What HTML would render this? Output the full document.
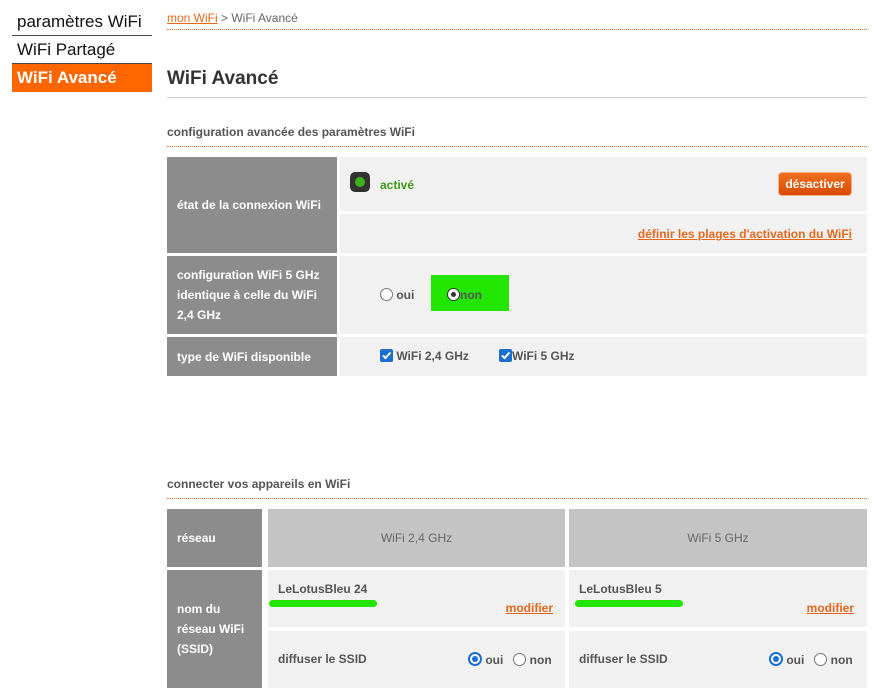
<!DOCTYPE html>
<html><head><meta charset="utf-8"><style>
*{margin:0;padding:0;box-sizing:border-box}
body{width:894px;height:688px;background:#fff;font-family:"Liberation Sans",Arial,sans-serif;position:relative;overflow:hidden;color:#555}
.a{position:absolute}
.dot{position:absolute;height:0;border-top:1px dotted #e07a30}
.lab{position:absolute;background:#8c8c8c;color:#fff;font-weight:bold;font-size:12px;line-height:20px;padding-left:10px;display:flex;align-items:center}
.cell{position:absolute;background:#f1f1f1}
.b{font-weight:bold;font-size:12px}
.lnk{color:#e8671c;text-decoration:underline;font-weight:bold;font-size:12px}
.rad{display:inline-block;width:13px;height:13px;border:1.5px solid #777;border-radius:50%;background:#fff;vertical-align:-2px}
.radb{display:inline-block;width:14px;height:14px;border:2px solid #1a6fd0;border-radius:50%;background:#fff;vertical-align:-2px;position:relative}
.radb:after{content:"";position:absolute;left:2px;top:2px;width:6px;height:6px;border-radius:50%;background:#1a6fd0}
.chk{display:inline-block;width:13px;height:13px;background:#1a6fd0;border-radius:2px;vertical-align:-2px;position:relative}
.chk svg{position:absolute;left:0;top:0}
</style></head><body>
<div class="a" style="left:17px;top:12px;font-size:17px;color:#111">paramètres WiFi</div>
<div class="a" style="left:12px;top:35px;width:140px;height:1px;background:#444"></div>
<div class="a" style="left:17px;top:40px;font-size:17px;color:#111">WiFi Partagé</div>
<div class="a" style="left:12px;top:63px;width:140px;height:1px;background:#444"></div>
<div class="a" style="left:12px;top:64px;width:140px;height:28px;background:#ff6600;color:#fff;font-weight:bold;font-size:17px;padding:4px 0 0 5px">WiFi Avancé</div>
<div class="a" style="left:167px;top:11px;font-size:12px;color:#666"><span style="color:#e8671c;text-decoration:underline">mon WiFi</span> &gt; WiFi Avancé</div>
<div class="dot" style="left:167px;top:29px;width:700px"></div>
<div class="a" style="left:167px;top:68px;font-size:19px;font-weight:bold;color:#333">WiFi Avancé</div>
<div class="a" style="left:167px;top:97px;width:700px;height:1px;background:#ccc"></div>
<div class="a b" style="left:167px;top:125px;color:#555">configuration avancée des paramètres WiFi</div>
<div class="dot" style="left:167px;top:146px;width:700px"></div>
<div class="lab" style="left:167px;top:157px;width:170px;height:96px">état de la connexion WiFi</div>
<div class="cell" style="left:340px;top:157px;width:527px;height:54px">
 <div class="a" style="left:10px;top:15px;width:20px;height:20px;background:#333;border-radius:5px"><div class="a" style="left:5px;top:5px;width:10px;height:10px;border-radius:50%;background:#3fb21a"></div></div>
 <div class="a b" style="left:40px;top:21px;color:#3d9a15">activé</div>
 <div class="a" style="left:438px;top:15px;width:74px;height:24px;background:linear-gradient(#f07020,#d94a00);border:1px solid #f5b080;border-radius:4px;color:#fff;font-weight:bold;font-size:12px;text-align:center;line-height:22px">désactiver</div>
</div>
<div class="cell" style="left:340px;top:214px;width:527px;height:39px">
 <div class="a lnk" style="right:15px;top:13px">définir les plages d'activation du WiFi</div>
</div>
<div class="lab" style="left:167px;top:256px;width:170px;height:78px">configuration WiFi 5 GHz<br>identique à celle du WiFi<br>2,4 GHz</div>
<div class="cell" style="left:340px;top:256px;width:527px;height:78px">
 <div class="a b" style="left:40px;top:32px"><span class="rad"></span> oui</div>
 <div class="a" style="left:91px;top:19px;width:78px;height:36px;background:#22e600"></div>
 <div class="a b" style="left:107px;top:32px"><span class="rad" style="border-color:#333;position:relative"><span class="a" style="left:2.5px;top:2.5px;width:5px;height:5px;border-radius:50%;background:#333"></span></span>non</div>
</div>
<div class="lab" style="left:167px;top:337px;width:170px;height:39px">type de WiFi disponible</div>
<div class="cell" style="left:340px;top:337px;width:527px;height:39px">
 <div class="a b" style="left:40px;top:12px"><span class="chk"><svg width="13" height="13"><path d="M3 6.5l2.5 2.5L10.5 3.5" stroke="#fff" stroke-width="2" fill="none"/></svg></span> WiFi 2,4 GHz</div>
 <div class="a b" style="left:159px;top:12px"><span class="chk"><svg width="13" height="13"><path d="M3 6.5l2.5 2.5L10.5 3.5" stroke="#fff" stroke-width="2" fill="none"/></svg></span>WiFi 5 GHz</div>
</div>
<div class="a b" style="left:167px;top:477px;color:#555">connecter vos appareils en WiFi</div>
<div class="dot" style="left:167px;top:498px;width:700px"></div>
<div class="lab" style="left:167px;top:509px;width:95px;height:58px">réseau</div>
<div class="a b" style="left:268px;top:509px;width:297px;height:58px;background:#c4c4c4;text-align:center;line-height:58px;color:#666;font-weight:normal">WiFi 2,4 GHz</div>
<div class="a b" style="left:569px;top:509px;width:298px;height:58px;background:#c4c4c4;text-align:center;line-height:58px;color:#666;font-weight:normal">WiFi 5 GHz</div>
<div class="lab" style="left:167px;top:570px;width:95px;height:118px">nom du<br>réseau WiFi<br>(SSID)</div>
<div class="cell" style="left:268px;top:570px;width:297px;height:57px">
 <div class="a b" style="left:10px;top:12px">LeLotusBleu 24</div>
 <div class="a" style="left:1px;top:30px;width:108px;height:7px;background:#22e600;border-radius:4px"></div>
 <div class="a lnk" style="right:12px;top:31px">modifier</div>
</div>
<div class="cell" style="left:569px;top:570px;width:298px;height:57px">
 <div class="a b" style="left:10px;top:12px">LeLotusBleu 5</div>
 <div class="a" style="left:6px;top:30px;width:108px;height:7px;background:#22e600;border-radius:4px"></div>
 <div class="a lnk" style="right:13px;top:31px">modifier</div>
</div>
<div class="cell" style="left:268px;top:631px;width:297px;height:57px">
 <div class="a b" style="left:10px;top:21px">diffuser le SSID</div>
 <div class="a b" style="left:200px;top:21px"><span class="radb"></span> oui &nbsp;&nbsp;<span class="rad"></span> non</div>
</div>
<div class="cell" style="left:569px;top:631px;width:298px;height:57px">
 <div class="a b" style="left:10px;top:21px">diffuser le SSID</div>
 <div class="a b" style="left:200px;top:21px"><span class="radb"></span> oui &nbsp;&nbsp;<span class="rad"></span> non</div>
</div>
</body></html>
